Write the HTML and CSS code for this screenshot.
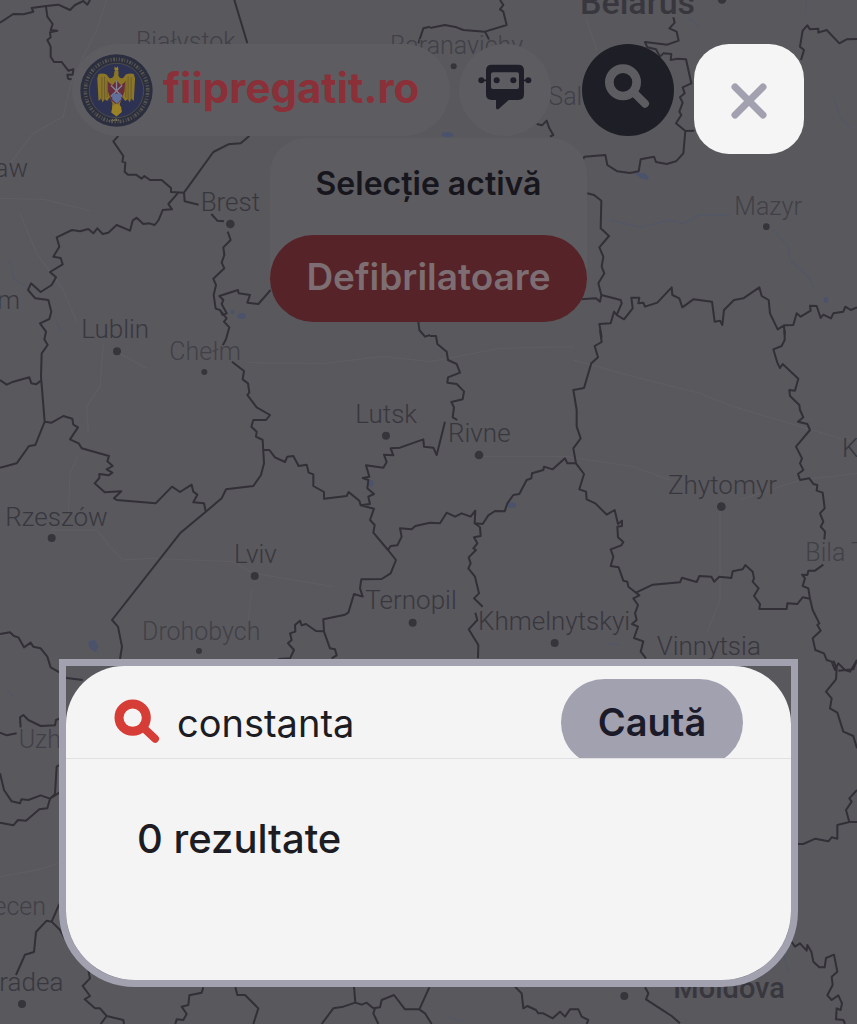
FILE: index.html
```html
<!DOCTYPE html>
<html lang="ro">
<head>
<meta charset="utf-8">
<meta name="viewport" content="width=device-width, initial-scale=1">
<title>fiipregatit.ro</title>
<link rel="stylesheet" href="styles.css">
</head>
<body>
<div class="app">
  <svg class="map" viewBox="0 0 2571 3072" preserveAspectRatio="xMidYMin slice" role="img" aria-label="Hartă">
    <g class="roads">
      <path d="M0 595L130 598L270 632M0 530L100 400L190 350L215 240L290 90L320 0M60 640L110 760L190 870L230 965M310 1030L300 1160L260 1220L265 1300M360 1060L440 1105M745 1088L970 1090L1150 1070L1290 1085L1500 1045L1720 1040M235 1365L210 1420L205 1550L155 1590L290 1590L330 1640L370 1680L450 1675L700 1685L760 1720L1000 1760M755 1770L745 1860M1440 1370L1700 1370L1900 1400L2010 1440M2160 1520L2160 1800L2120 1900M2220 1500L2400 1440L2571 1420M1720 1080L1900 1130L2100 1180L2200 1220L2571 1330M0 2630L110 2610L175 2590M1760 60L1790 150"/>
    </g>
    <g class="water">
      <path d="M30 780L40 835L80 860M170 965L185 1000M1830 660L1920 682L2010 660L2050 670L2100 645L2190 645M2320 690L2365 740L2370 780L2425 830L2440 860M2500 290L2520 350L2550 385M2417 0L2417 40M2060 50L2100 80M1820 1930L1860 1935M270 1920L295 1960M20 2070L40 2090M1340 3050L1390 3065M2350 2860L2365 2920"/>
      <ellipse cx="725" cy="948" rx="13" ry="9"/><ellipse cx="698" cy="936" rx="6" ry="7"/>
      <ellipse cx="1342" cy="404" rx="18" ry="8"/><path class="lake" d="M1903 518l30 2l14 12l-6 8l-20-6z"/>
      <ellipse cx="1535" cy="1515" rx="14" ry="8"/><ellipse cx="1112" cy="1450" rx="8" ry="10"/>
      <path class="lake" d="M265 1925l20-5l10 20l-10 15l-18-12z"/><ellipse cx="2478" cy="900" rx="7" ry="9"/>
    </g>
    <g class="borders">
      <g>
        <path d="M0 68L40 42L70 43L100 35L95 24L138 18L175 14L210 30L225 15L250 3L262 14L270 0M138 20L142 50L158 72L152 90L172 92L150 97L152 112L142 120L152 140L152 170L162 186L185 186L205 212L220 208L218 224L202 224L204 236L215 238M703 0L742 130M1255 130L1270 85L1290 80M355 408L340 424L370 468L367 485L376 488L374 515L384 524L408 524L425 536L433 528L450 540L485 540L513 564L513 576L552 578L640 456L685 433L722 430L748 408M552 578L554 604L596 614M634 642L652 662L672 664M683 695L692 720L670 742L673 765L665 788L673 805L640 836L648 855L641 885L647 926L660 930L668 945L680 940L665 912L670 900L658 888L714 870L716 880L750 885L742 908L775 912L812 870M660 930L680 955L672 965L688 982L678 1018L665 1042M535 578L505 612L516 628L488 630L476 660L464 675L448 670L430 672L410 653L398 662L390 692L350 675L325 698L308 702L292 685L280 700L265 687L240 694L216 690L170 712L178 740L160 770L182 774L188 793L150 816L168 832L155 855L122 876L93 850L84 870L106 895L145 900L154 935L148 957L120 970L138 995L133 1018L143 1035L125 1060L123 1130L134 1265L106 1335L87 1338L50 1390L0 1403M1255 965L1258 990L1275 1010L1290 1005M0 1140L20 1154L40 1145L88 1132L94 1150L108 1153L123 1142M134 1265L155 1268L190 1248L217 1256L220 1274L234 1282L210 1318L236 1330L245 1345L327 1368L322 1384L338 1398L320 1408L337 1418L326 1426L298 1422L298 1434L284 1450L314 1477L364 1474L342 1495L350 1500L467 1510L516 1460L540 1476L575 1454L580 1475L592 1484L580 1507L612 1510L617 1533"/>
        <path d="M696 1085L732 1113L728 1138L744 1150L748 1178L742 1185L770 1222L810 1245L798 1260L760 1260L754 1280L770 1295L768 1310L788 1320L792 1390L783 1425L760 1458L678 1468L665 1495L620 1533L540 1600L336 1860L354 1880L366 1940L360 1977M792 1350L808 1350L825 1372L855 1386L862 1370L880 1368L896 1398L920 1394L926 1418L940 1423L940 1458L972 1476L972 1496L1040 1488L1046 1476L1078 1502L1082 1516L1122 1526L1110 1560L1124 1575L1120 1598L1164 1650L1188 1680L1172 1720L1145 1737L1084 1738L1080 1765L1088 1790L1062 1782L1045 1838L1035 1844L970 1858L972 1895L990 1945L1005 1948L1010 1966L995 1975M970 1894L948 1893L918 1872L905 1876L900 1862L885 1875L886 1895L870 1900L875 1920L864 1930L882 1950L870 1975L835 1977M1082 1516L1110 1512L1105 1490L1122 1482L1102 1465L1105 1440L1088 1434L1108 1430L1098 1396L1150 1403L1160 1386L1152 1364L1180 1366L1172 1345L1200 1343L1270 1318L1272 1340L1300 1343L1310 1365L1335 1265M1164 1650L1172 1638L1192 1636L1205 1610L1200 1585L1235 1588L1246 1578L1290 1568L1320 1570L1340 1538L1365 1550L1385 1540L1412 1550L1426 1532L1424 1570L1448 1572L1465 1546L1485 1533L1514 1534L1522 1510L1540 1485L1558 1482L1580 1440L1594 1435L1596 1420L1630 1410L1632 1400L1658 1408L1695 1375L1702 1390L1728 1390"/>
      </g>
      <g transform="translate(1290 0)">
        <path d="M210 0L220 15L210 28L220 35L230 75L165 95L100 90L80 82L45 75L0 84M165 95L178 120M320 372L336 376L350 362L358 385L370 405L360 410M730 52L734 68L718 85L740 95L746 122L712 134L645 126L652 142L678 148L690 170L700 160L724 162L722 180L742 176L768 178L784 250L758 262L764 280L750 292L758 308L748 335L754 345L738 370L766 393L793 392M766 393L760 460L738 484L710 492L678 486L672 470L632 478L626 514L600 519L562 514L532 495L526 465L463 470L456 486M472 580L492 585L514 602L512 685L537 708L508 742L520 770L515 800L523 820L505 850L514 885L572 900L575 910L560 945L552 935L542 970L508 972L515 1012M452 898L498 895L510 905L514 885M1113 180L1122 150L1110 140L1118 92L1132 76L1140 88L1165 86L1165 98L1190 90L1228 130L1250 118L1281 117M560 945L582 958L608 925L604 893L628 893L625 910L640 908L645 920L682 908L725 862L727 885L748 895L757 922L790 898L846 905L854 965L870 962L877 975L882 930L912 900L940 895L988 862L995 888L1016 900L1020 940L1043 988L1062 976L1090 975L1100 940L1112 950L1142 932L1140 917L1160 918L1172 954L1180 944L1203 955L1210 940L1240 935L1246 920L1262 930L1281 922M1062 976L1064 1005"/>
      </g>
      <g transform="translate(1290 990)">
        <path d="M0 18L18 18L22 42L50 65L54 90L80 102L90 128L54 142L52 158L80 162L102 184L98 208L64 216L72 232L68 262L82 270M510 0L515 36L494 48L504 82L484 100L462 174L430 180L440 240L440 290L452 325L430 355L438 400L462 432L448 478L468 485L470 508L496 520L530 554L554 540L564 582L576 572L576 588L562 590L564 622L580 636L574 646L542 658L550 680L542 708L566 712L580 752L592 755L595 770L618 788L668 764L750 757L756 743L800 756L808 738L844 740L853 755L868 740L904 744L908 724L938 718L946 705L968 725L972 745L968 755L986 775L972 798L990 822L988 837L1070 837L1072 820L1102 822L1118 802L1140 806L1135 775L1118 768L1125 745L1116 734L1132 735L1135 722L1155 722L1180 704M1064 0L1064 30L1055 48L1030 58L1042 98L1050 114L1058 102L1105 146L1095 182L1078 180L1080 198L1108 225L1110 240L1120 262L1104 275L1132 282L1140 300L1098 350L1116 385L1110 400L1120 420L1104 432L1110 450L1138 445L1150 462L1162 465L1160 482L1178 488L1184 535L1170 550L1180 575L1172 590L1185 605L1183 628M1140 806L1148 840L1168 880L1162 885L1172 902L1148 925L1156 960L1182 970L1190 990L1205 995L1215 1020L1225 1000L1245 1020L1260 1025L1281 990M135 580L150 592L152 618L132 622L142 640L130 655L138 660L116 682L122 700L115 715L135 740L147 790L132 805L158 830M136 848L142 870L116 898L145 945L144 985M618 788L628 796L610 805L624 825L615 850L620 870L606 882L624 890L612 924L640 934L632 965L648 985"/>
      </g>
      <g transform="translate(0 1920)">
        <path d="M0 -18L30 -23L42 -12L55 -8L72 22L92 8L100 20L122 25L142 50L152 82L180 98L200 114L248 120M0 278L20 286L50 280M62 262L60 232L70 225L85 240L122 258L165 256L168 240L178 236M0 400L12 450L35 484L60 490L64 478L85 480L122 466L150 476L178 458M178 375L170 380L165 462L150 476L142 505L118 508L78 542L54 540L40 556L0 548M178 792L155 845L180 870L210 925M155 845L140 842L108 876L102 936L75 944L48 1005M265 990L270 1015L248 1038L270 1068L254 1078L285 1105L300 1105L320 1128L370 1140L372 1152M320 1128L302 1152M610 1042L605 1058L568 1066L565 1095L545 1100L560 1122L550 1140L530 1138L526 1152M706 1042L712 1065L735 1065L775 1105L760 1152M1062 1040L1066 1088L1030 1100L1000 1105L965 1152M1066 1088L1085 1094L1100 1088L1120 1105L1140 1102L1145 1080L1182 1065L1215 1108L1258 1108L1288 1042M1125 1105L1120 1120L1135 1152M1258 1108L1275 1120L1295 1152"/>
      </g>
      <g transform="translate(1290 1920)">
        <path d="M255 1040L275 1060L280 1105L292 1098L318 1110L325 1120L340 1120L368 1135L390 1115L405 1130L420 1108L445 1108L455 1130L475 1140L470 1152M645 1042L655 1060L648 1078L700 1112L725 1128L750 1150M1210 62L1220 85L1218 118L1188 155L1205 175L1200 205L1222 218L1240 275L1270 288L1281 325M1225 92L1270 88L1281 60M1281 450L1258 475L1265 485L1248 510L1258 546L1281 546M1258 546L1222 555L1222 596L1205 592L1195 604L1156 596L1120 612L1104 612M1082 902L1095 920L1110 910L1130 932L1132 915L1144 935L1150 965L1168 982L1184 982L1188 954L1212 944L1222 995L1205 1010L1208 1035L1192 1066L1205 1080L1225 1066L1236 1090L1232 1110L1220 1105L1218 1138L1240 1140L1245 1152"/>
      </g>
    </g>
    <g class="dots">
      <circle cx="691" cy="672" r="13"/><circle cx="351" cy="1054" r="12"/><circle cx="613" cy="1116" r="9"/><circle cx="1158" cy="1307" r="12"/><circle cx="1437" cy="1365" r="13"/><circle cx="2164" cy="1520" r="13"/><circle cx="155" cy="1614" r="12"/><circle cx="764" cy="1728" r="12"/><circle cx="597" cy="1953" r="9"/><circle cx="1238" cy="1868" r="12"/><circle cx="1664" cy="1929" r="12"/><circle cx="2299" cy="680" r="10"/><circle cx="1361" cy="199" r="9"/><circle cx="66" cy="3012" r="12"/><circle cx="1873" cy="2988" r="12"/><circle cx="2166" cy="-2" r="13"/>
    </g>
    <g class="places">
      <g class="minor">
        <text x="408" y="150">Białystok</text><text x="1170" y="162">Baranavichy</text><text x="1645" y="315">Salihorsk</text>
        <text x="508" y="1080">Chełm</text><text x="426" y="1920">Drohobych</text><text x="2203" y="646">Mazyr</text><text x="2416" y="1682">Bila T</text><text x="56" y="2244">Uzh</text>
        <text x="138" y="2745" text-anchor="end">ecen</text>
      </g>
      <text x="84" y="530" text-anchor="end">aw</text><text x="60" y="928" text-anchor="end">m</text>
      <text x="602" y="632">Brest</text><text x="244" y="1014">Lublin</text><text x="1066" y="1268">Lutsk</text><text x="1344" y="1325">Rivne</text><text x="2004" y="1481">Zhytomyr</text><text x="16" y="1577">Rzeszów</text><text x="702" y="1688">Lviv</text><text x="1096" y="1828">Ternopil</text><text x="1434" y="1889">Khmelnytskyi</text><text x="1970" y="1966">Vinnytsia</text><text x="2526" y="1372">K</text><text x="190" y="2972" text-anchor="end">radea</text>
      <g class="country"><text x="1740" y="43">Belarus</text><text class="small" x="2020" y="2993">Moldova</text></g>
    </g>
  </svg>

  <div class="toolbar">
    <a class="brand" href="#">
      <svg class="emblem" viewBox="0 0 220 220" aria-hidden="true">
        <circle cx="110" cy="110" r="109" fill="#2b2e3f"/>
        <circle cx="110" cy="110" r="94" fill="none" stroke="#56544d" stroke-width="11" stroke-dasharray="3 4 5 3 2 5" pathLength="520"/>
        <circle cx="110" cy="110" r="82" fill="#2d3253" stroke="#5c5a48" stroke-width="2"/>
        <path d="M104 52q6-10 12 0l0 14q6 10 14 6l8-10q12-6 24-2l4 14-4 68-8-8-4 12-6-10-8 6-8-12-8 20 2 10-12 14-14-14 2-10-8-20-8 12-8-6-6 10-4-12-8 8-4-68 4-14q12-4 24 2l8 10q8 4 14-6z" fill="#8b7526"/>
        <path d="M84 84l14 10 12-14 14 14 12-10-2 28-10 28-14 12-16-12-10-28z" fill="#672d3d"/>
        <path d="M93 94l34 34M127 94l-34 34M110 80v28" stroke="#858497" stroke-width="4"/>
        <path d="M97 119h27v18l-13 13-14-13z" fill="#60709b"/>
        <path d="M66 70v70M74 68v72M82 80v50M154 70v70M145 68v72M138 80v50" stroke="#5d5230" stroke-width="2"/>
        <path d="M104 48v-10l5 4 5-5 2 11zM98 158l12-9 14 10 2 16-16 13-16-12z" fill="#9b8125"/>
        <path d="M86 202h5m4 0l3-6 3 6m4 0v-6h5v6m5 0v-6" stroke="#77745a" stroke-width="3" fill="none"/>
      </svg>
      <span>fiipregatit.ro</span>
    </a>
    <button class="round chat" type="button" aria-label="Asistent">
      <svg viewBox="-4 12 276 276" aria-hidden="true">
        <path fill="#1e1e28" fill-rule="evenodd" d="M94 74h80q17 0 17 17v72q0 17-17 17h-29l-30 27q-8 4-8-5v-22H94q-17 0-17-17V91q0-17 17-17zm4 23q-6 0-6 6v38q0 6 6 6h72q6 0 6-6v-38q0-6-6-6z"/>
        <path d="M64 121h15M190 121h15" stroke="#1e1e28" stroke-width="5"/>
        <g fill="#1e1e28"><circle cx="63" cy="121" r="9"/><circle cx="204" cy="121" r="9"/><circle cx="109" cy="121" r="9"/><circle cx="159" cy="121" r="9"/></g>
      </svg>
    </button>
    <button class="round find" type="button" aria-label="Căutare">
      <svg viewBox="366 12 276 276" aria-hidden="true">
        <circle cx="489" cy="127" r="41" fill="none" stroke="#5d5c61" stroke-width="26"/>
        <path d="M524 160l31 31" stroke="#5d5c61" stroke-width="24" stroke-linecap="round"/>
      </svg>
    </button>
  </div>

  <section class="selection">
    <h2>Selecție activă</h2>
    <button type="button">Defibrilatoare</button>
  </section>

  <div class="overlay">
    <button class="close" type="button" aria-label="Închide">
      <svg viewBox="0 0 36 36" aria-hidden="true"><path d="M4 4l28 28M32 4L4 32"/></svg>
    </button>
    <div class="dialog" role="dialog" aria-label="Căutare">
      <div class="sheet">
        <form class="search">
          <svg class="lens" viewBox="0 0 135 129" aria-hidden="true">
            <circle cx="56" cy="53" r="41" fill="none" stroke="#d63d36" stroke-width="27"/>
            <path d="M91 86l32 30" stroke="#d63d36" stroke-width="24" stroke-linecap="round"/>
          </svg>
          <input type="text" value="constanta" aria-label="Caută o locație">
          <button type="button">Caută</button>
        </form>
        <p class="results">0 rezultate</p>
      </div>
    </div>
  </div>
</div>
</body>
</html>
```
FILE: styles.css
```css
* { box-sizing: border-box; }

body {
  margin: 0;
  background: #59585d;
  color: #1c1c22;
  font-family: Inter, "Open Sans", sans-serif;
}

button, input { font: inherit; color: inherit; border: 0; padding: 0; }
button { cursor: pointer; }

.app {
  position: relative;
  min-height: 100vh;
  overflow: hidden;
}

/* Map canvas */
.map {
  position: absolute;
  inset: 0;
  width: 100%;
  height: 100%;
}
.roads { fill: none; stroke: #5e5d62; stroke-width: 4; }
.water { fill: #4b526b; }
.water path { fill: none; stroke: #525767; stroke-width: 4; }
.water .lake { fill: #4b526b; stroke: none; }
.borders { fill: none; stroke: #322f37; stroke-width: 6; stroke-linejoin: round; }
.dots { fill: #36353b; }
.places {
  fill: #38373d;
  font-family: Roboto, sans-serif;
  font-size: 78px;
  font-weight: 300;
  paint-order: stroke;
  stroke: #59585d;
  stroke-width: 6px;
}
.minor { fill: #414047; font-size: 75px; }
.country { font-size: 102px; font-weight: 500; }
.country .small { font-size: 87px; }

/* Toolbar */
.toolbar {
  position: relative;
  display: flex;
  padding: 44px 183px 0 72px;
}
.brand {
  flex: 1;
  display: flex;
  align-items: center;
  gap: 10px;
  height: 92px;
  margin-right: 9px;
  padding-left: 8px;
  border-radius: 46px;
  background: #5d5c61;
  color: #8b3038;
  font-size: 42px;
  line-height: 48px;
  font-weight: 700;
  text-decoration: none;
  white-space: nowrap;
}
.brand span { padding-bottom: 4px; }
.emblem { flex: none; width: 73px; height: 73px; }
.round {
  flex: none;
  width: 92px;
  height: 92px;
  border-radius: 50%;
  background: #5d5c61;
}
.round svg { display: block; width: 100%; }
.find { margin-left: 31px; background: #1e1e27; }

/* Active selection */
.selection {
  position: relative;
  width: max-content;
  margin: 2px auto 0;
  border-radius: 36px 36px 44px 44px;
  background: #5d5c61;
  text-align: center;
}
.selection h2 {
  margin: 0;
  padding-top: 28px;
  height: 97px;
  font-size: 32px;
  line-height: 36px;
  font-weight: 600;
  color: #17161d;
}
.selection button {
  height: 87px;
  padding: 0 36px 4px;
  border-radius: 44px;
  background: #562328;
  color: #7c6e72;
  font-size: 37px;
  font-weight: 600;
}

/* Search overlay */
.overlay {
  position: absolute;
  inset: 0;
  display: flex;
  flex-direction: column;
  justify-content: space-between;
  padding: 44px 53px 37px;
}
.close {
  align-self: flex-end;
  display: grid;
  place-items: center;
  width: 110px;
  height: 110px;
  border-radius: 35px;
  background: #f5f5f6;
}
.close svg { width: 36px; height: 36px; margin-top: 3px; overflow: visible; }
.close path { stroke: #a2a1b0; stroke-width: 7; stroke-linecap: round; }
.dialog {
  margin: 0 6px;
  border: 7px solid #a2a1b0;
  border-radius: 0 0 76px 76px;
}
.sheet {
  min-height: 314px;
  overflow: hidden;
  border-radius: 58px 58px 69px 69px;
  background: #f4f4f5;
}
.search {
  display: flex;
  align-items: flex-start;
  height: 93px;
  padding: 13px 48px 0;
  overflow: hidden;
  border-bottom: 1px solid #e1e1e3;
}
.lens { flex: none; width: 45px; height: 43px; margin-top: 21px; overflow: visible; }
.search input {
  flex: 1;
  min-width: 0;
  height: 87px;
  margin-left: 18px;
  background: none;
  outline: 0;
  font-size: 38px;
}
.search button {
  flex: none;
  width: 182px;
  height: 87px;
  padding-bottom: 2px;
  border-radius: 44px;
  background: #a2a1b0;
  color: #1b1a28;
  font-size: 38px;
  font-weight: 600;
}
.results {
  margin: 0;
  padding: 56px 71px;
  font-size: 40px;
  line-height: 48px;
  font-weight: 500;
}
```
